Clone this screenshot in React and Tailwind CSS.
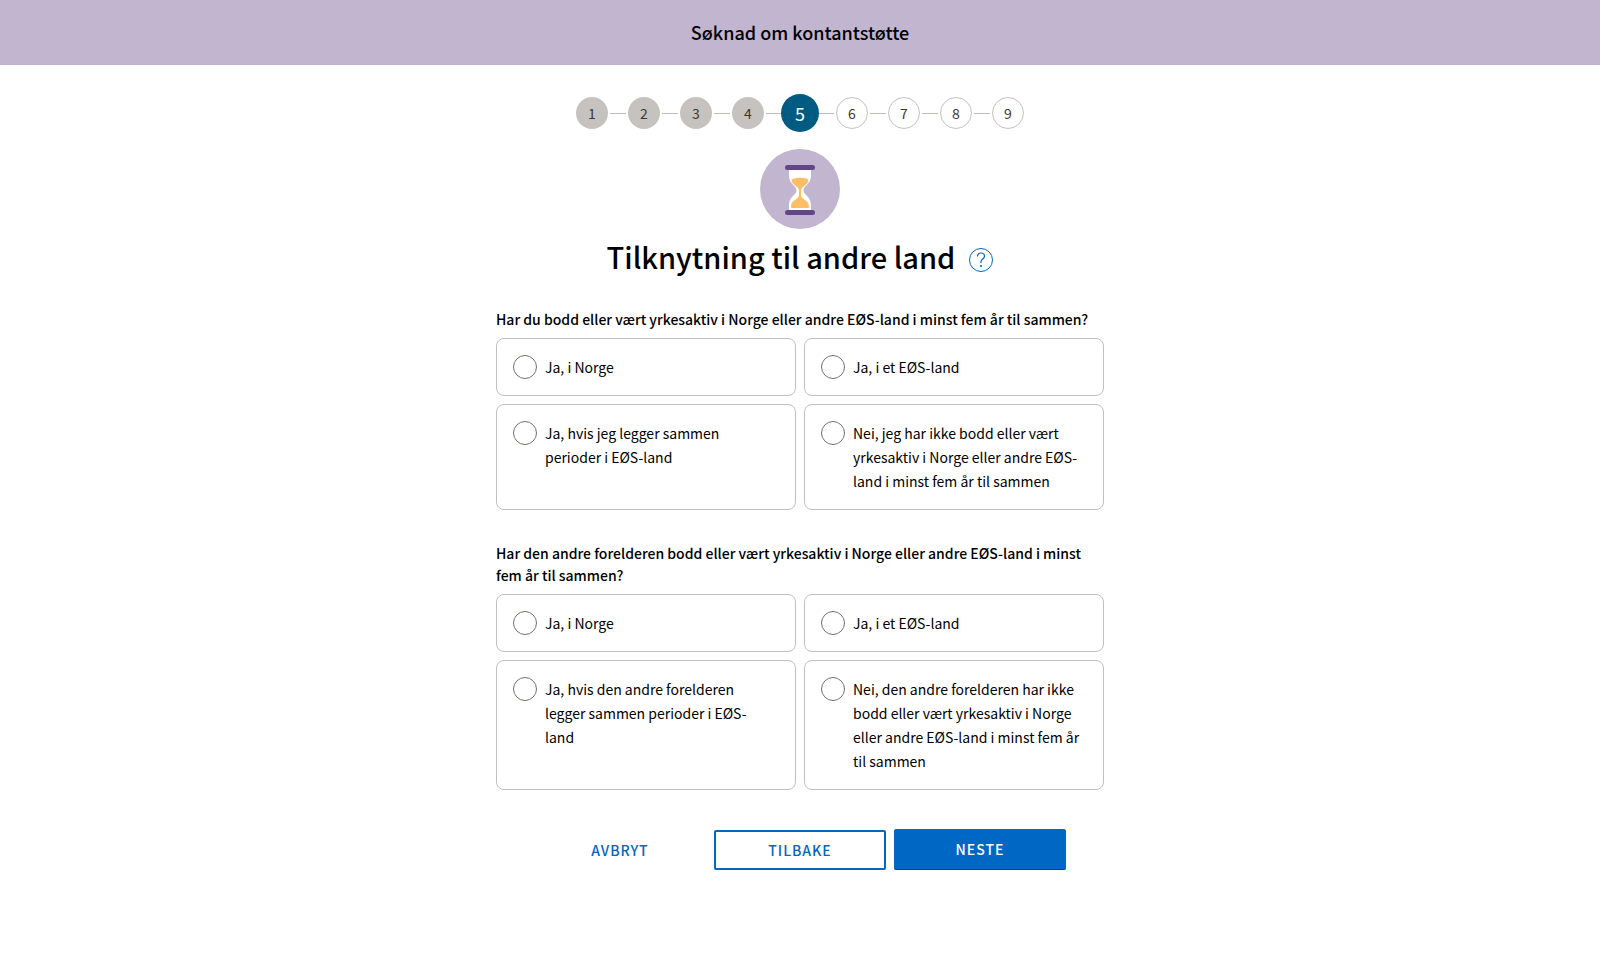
const STEPS = [1, 2, 3, 4, 5, 6, 7, 8, 9];
const CURRENT_STEP = 5;

const QUESTIONS = [
  {
    name: 'soker',
    legend: 'Har du bodd eller vært yrkesaktiv i Norge eller andre EØS-land i minst fem år til sammen?',
    options: [
      'Ja, i Norge',
      'Ja, i et EØS-land',
      'Ja, hvis jeg legger sammen perioder i EØS-land',
      'Nei, jeg har ikke bodd eller vært yrkesaktiv i Norge eller andre EØS-land i minst fem år til sammen',
    ],
  },
  {
    name: 'annen-forelder',
    legend:
      'Har den andre forelderen bodd eller vært yrkesaktiv i Norge eller andre EØS-land i minst fem år til sammen?',
    options: [
      'Ja, i Norge',
      'Ja, i et EØS-land',
      'Ja, hvis den andre forelderen legger sammen perioder i EØS-land',
      'Nei, den andre forelderen har ikke bodd eller vært yrkesaktiv i Norge eller andre EØS-land i minst fem år til sammen',
    ],
  },
];

function stepClass(step) {
  const base = 'relative flex shrink-0 items-center justify-center rounded-full ';
  if (step === CURRENT_STEP) return base + 'size-[38px] bg-[#005b82] text-[18px] text-white';
  if (step < CURRENT_STEP) return base + 'size-8 bg-[#c6c2bf] text-[14px] text-[#3e3832]';
  return base + 'size-8 border border-[#c6c2bf] bg-white text-[14px] text-[#3e3832]';
}

function Stepper() {
  return (
    <ol className="flex h-8 items-center justify-center" aria-label="Steg">
      {STEPS.map((step) => (
        <li key={step} className="flex items-center">
          {step > 1 && <span className="mx-[2px] h-px w-4 bg-[#c0bcb8]" />}
          <span className="flex w-8 justify-center">
            <button type="button" className={stepClass(step)} aria-current={step === CURRENT_STEP ? 'step' : undefined}>
              {step}
            </button>
          </span>
        </li>
      ))}
    </ol>
  );
}

function Hourglass() {
  return (
    <svg className="size-20" viewBox="0 0 80 80" aria-hidden="true">
      <circle cx="40" cy="40" r="40" fill="#c1b5d0" />
      <path
        d="M29 20H51V27C51 35 43.500 36.500 43.500 41.500C43.500 46 51 47.500 51 56V62H29V56C29 47.500 36.500 46 36.500 41.500C36.500 36.500 29 35 29 27Z"
        fill="#fff"
      />
      <path
        d="M31.800 32.500C30.800 29.500 35 28.700 40 28.700S49.200 29.500 48.200 32.500C47 36.500 41 37.500 41 41.500V47C41.500 50 49 51.500 49 57.500C49 58.500 48.500 59 47.500 59H32.500C31.500 59 31 58.500 31 57.500C31 51.500 38.500 50 39 47V41.500C39 37.500 33 36.500 31.800 32.500Z"
        fill="#ffbd66"
      />
      <rect x="25" y="16" width="30" height="5" rx="2.500" fill="#634689" />
      <rect x="25" y="61" width="30" height="5" rx="2.500" fill="#634689" />
    </svg>
  );
}

function HelpIcon() {
  return (
    <svg className="size-6" viewBox="0 0 24 24" fill="none" stroke="#0067c5" aria-hidden="true">
      <circle cx="12" cy="12" r="11.500" />
      <path d="M8.500 8.500C8.500 6.300 10 5 12 5S15.500 6.300 15.500 8.300C15.500 11 12 11 12 13.500V15" strokeWidth="1.200" />
      <circle cx="12" cy="18" r="1" fill="#0067c5" stroke="none" />
    </svg>
  );
}

function Question({ name, legend, options }) {
  return (
    <fieldset className="w-full">
      <legend className="mb-2 text-[14px] leading-[22px] font-medium">{legend}</legend>
      <div className="grid grid-cols-2 gap-2">
        {options.map((option) => (
          <label key={option} className="flex items-start gap-2 rounded-lg border border-[#c0c0c0] py-4 pr-5 pl-4">
            <input
              type="radio"
              name={name}
              className="size-6 shrink-0 appearance-none rounded-full border border-[#78706a] bg-white checked:border-8 checked:border-[#0067c5]"
            />
            <span className="text-[14px] leading-6">{option}</span>
          </label>
        ))}
      </div>
    </fieldset>
  );
}

export default function App() {
  return (
    <div className="min-h-screen bg-white font-['Noto_Sans_CJK_SC',sans-serif] text-black">
      <header className="flex h-[65px] items-center justify-center bg-[#c1b5d0] pb-[2px]">
        <p className="text-[18px] leading-6 font-medium">Søknad om kontantstøtte</p>
      </header>
      <main className="mx-auto flex max-w-[608px] flex-col items-center pt-8">
        <Stepper />
        <div className="mt-5">
          <Hourglass />
        </div>
        <div className="mt-[7px] flex items-center gap-[14px]">
          <h1 className="text-[29px] leading-10 font-medium">Tilknytning til andre land</h1>
          <button type="button" className="mt-2" aria-label="Hjelp">
            <HelpIcon />
          </button>
        </div>
        <form className="mt-8 flex w-full flex-col items-center">
          <div className="flex w-full flex-col gap-8">
            {QUESTIONS.map((question) => (
              <Question key={question.name} {...question} />
            ))}
          </div>
          <div className="mt-[39px] grid grid-cols-[172px_172px_172px] items-end gap-2 text-[14px] leading-5 font-medium tracking-[1px]">
            <button type="button" className="h-10 text-[#0067c5]">
              AVBRYT
            </button>
            <button type="button" className="h-10 rounded-xs border-2 border-[#0067c5] text-[#0067c5]">
              TILBAKE
            </button>
            <button type="button" className="h-[41px] rounded-xs border-b border-[#3e3832] bg-[#0067c5] text-white">
              NESTE
            </button>
          </div>
        </form>
      </main>
    </div>
  );
}
